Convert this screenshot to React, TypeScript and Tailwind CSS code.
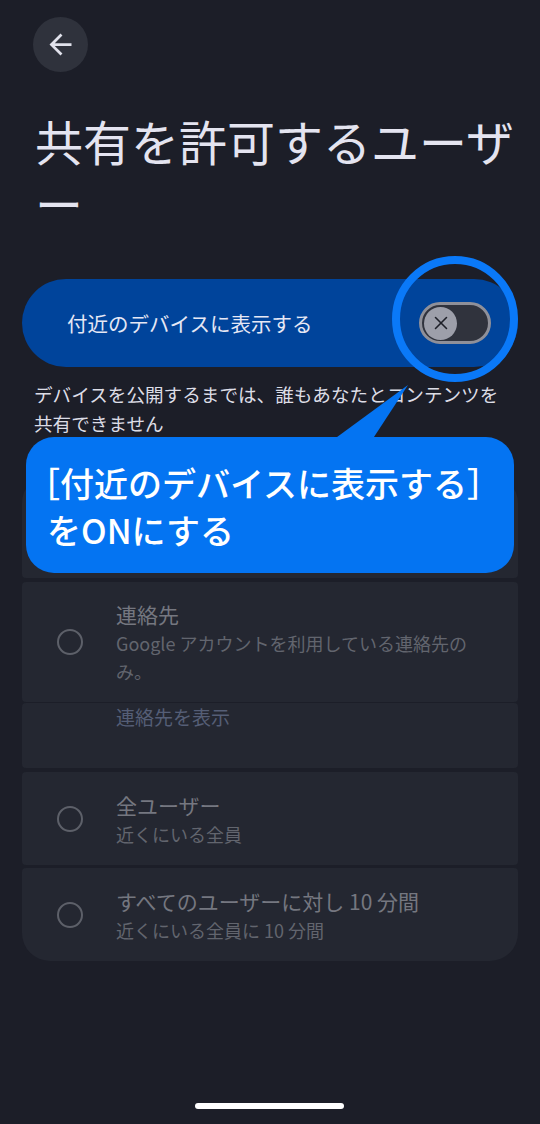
import { X } from "lucide-react";

const font = { fontFamily: '"Noto Sans CJK JP", "Noto Sans", sans-serif' };

function Radio() {
    return (
        <div className="size-[26px] shrink-0 rounded-full border-[2.5px] border-[#5d6069]" />
    );
}

function Option({
    title,
    sub,
    className,
}: {
    title: string;
    sub: string;
    className: string;
}) {
    return (
        <div
            className={
                "flex items-center bg-[#242731] pl-[35px] pr-[20px] pt-[18px] pb-[17px] " +
                className
            }
        >
            <Radio />
            <div className="ml-[33px] flex-1">
                <div className="text-[21px] leading-[30px] text-[#757780]">{title}</div>
                <div className="text-[18px] leading-[28px] text-[#62656e]">{sub}</div>
            </div>
        </div>
    );
}

export default function App() {
    return (
        <div
            className="relative w-[540px] h-[1124px] overflow-hidden bg-[#1c1e28] pt-[17px]"
            style={font}
        >
            {/* back */}
            <div className="ml-[33px] size-[55px] rounded-full bg-[#2f323c] flex items-center justify-center">
                <svg viewBox="0 0 24 24" className="size-[33px]" fill="#e1e2ec">
                    <path d="M20 11H7.83l5.59-5.59L12 4l-8 8 8 8 1.41-1.41L7.83 13H20v-2z" />
                </svg>
            </div>

            <h1 className="mt-[37px] pl-[35px] text-[48px] leading-[62px] font-normal text-[#e4e4f0] whitespace-nowrap">
                共有を許可するユーザ
                <br />ー
            </h1>

            {/* visibility toggle */}
            <div className="mt-[46px] mx-[22px] h-[88px] rounded-full bg-[#00449b] flex items-center pl-[45px] pr-[27px]">
                <span className="flex-1 text-[20.5px] text-[#e6e8f5]">付近のデバイスに表示する</span>
                <div className="w-[72px] h-[42px] rounded-full border-[3px] border-[#8f9099] bg-[#30333d] flex items-center pl-[2px]">
                    <div className="size-[33px] rounded-full bg-[#9d9faa] flex items-center justify-center">
                        <X className="size-[22px] text-[#1e2029]" strokeWidth={1.7} />
                    </div>
                </div>
            </div>

            <p className="mt-[12px] pl-[34px] pr-[32px] text-[18.6px] leading-[29px] text-[#dcdde6]">
                デバイスを公開するまでは、誰もあなたとコンテンツを共有できません
            </p>

            {/* options */}
            <div className="mt-[38px] mx-[22px] flex flex-col">
                <div className="h-[103px] bg-[#242731] rounded-t-[28px] rounded-b-[4px]" />
                <div className="mt-[4px] flex items-center bg-[#242731] rounded-[4px] pl-[35px] pr-[20px] pt-[17px] pb-[17px]">
                    <Radio />
                    <div className="ml-[33px] flex-1 pr-[8px]">
                        <div className="text-[21px] leading-[30px] text-[#757780]">連絡先</div>
                        <div className="text-[18px] leading-[28px] text-[#62656e]">
                            Google アカウントを利用している連絡先のみ。
                        </div>
                    </div>
                </div>
                <div className="mt-[1px] h-[65px] bg-[#242731] rounded-[4px] pl-[94px]">
                    <span className="text-[19px] leading-[28px] text-[#555e76]">連絡先を表示</span>
                </div>
                <Option
                    title="全ユーザー"
                    sub="近くにいる全員"
                    className="mt-[4px] rounded-[4px]"
                />
                <Option
                    title="すべてのユーザーに対し 10 分間"
                    sub="近くにいる全員に 10 分間"
                    className="mt-[3px] rounded-t-[4px] rounded-b-[28px]"
                />
            </div>

            {/* home indicator */}
            <div className="absolute left-[195px] top-[1103px] w-[149px] h-[6px] rounded-full bg-white" />

            {/* callout tail */}
            <svg
                className="absolute left-0 top-0"
                width="540"
                height="600"
                viewBox="0 0 540 600"
            >
                <polygon points="333,440 372,440 408,385" fill="#0474f2" />
            </svg>

            {/* highlight ring */}
            <div className="absolute left-[392px] top-[256px] size-[126px] rounded-full border-[8px] border-[#0a79f8]" />

            {/* callout */}
            <div className="absolute left-[26px] top-[437px] w-[488px] h-[136px] rounded-[28px] bg-[#0474f2] pt-[22px] text-[34px] leading-[47px] text-white font-medium whitespace-nowrap">
                ［付近のデバイスに表示する］
                <br />
                <span className="pl-[21px]">をONにする</span>
            </div>
        </div>
    );
}
